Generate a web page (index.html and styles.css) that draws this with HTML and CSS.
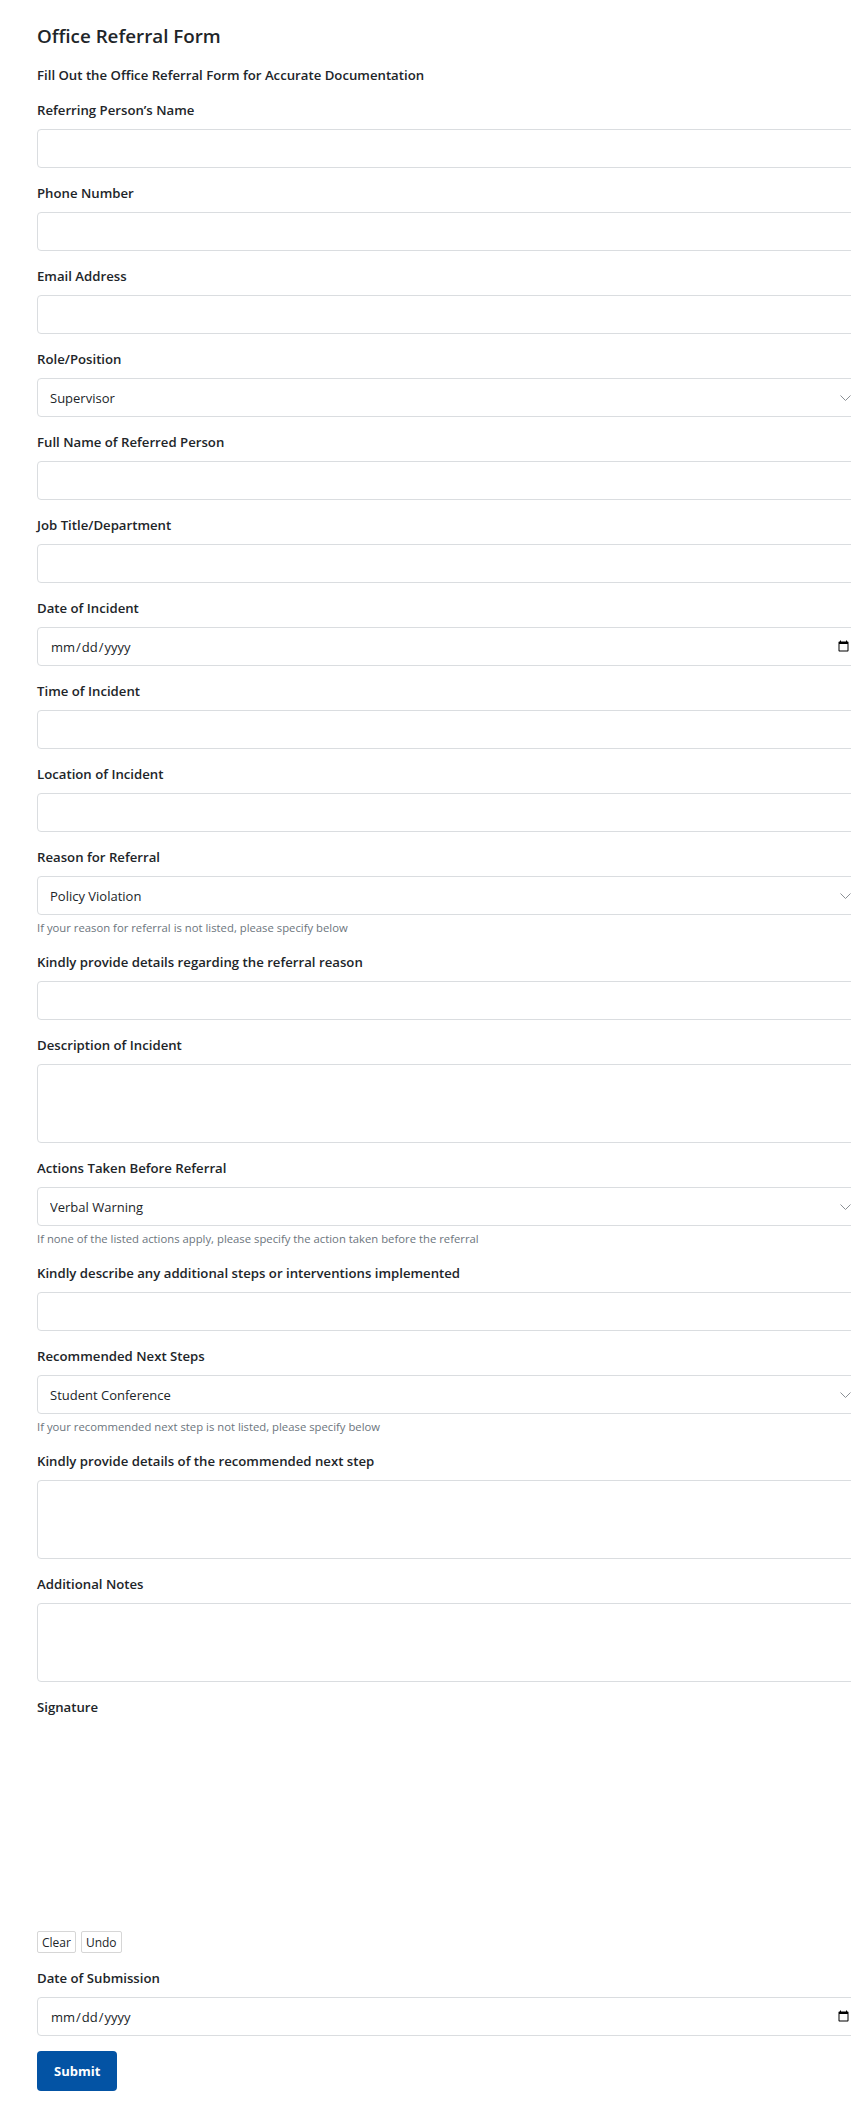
FILE: index.html
```html
<!DOCTYPE html>
<html lang="en">
<head>
<meta charset="utf-8">
<title>Office Referral Form</title>
<link rel="stylesheet" href="styles.css">
</head>
<body>
<div class="page">
<form class="form">
  <h1 class="title">Office Referral Form</h1>
  <p class="subtitle">Fill Out the Office Referral Form for Accurate Documentation</p>

  <div class="group">
    <label class="label">Referring Person’s Name</label>
    <input class="control" type="text">
  </div>
  <div class="group">
    <label class="label">Phone Number</label>
    <input class="control" type="text">
  </div>
  <div class="group">
    <label class="label">Email Address</label>
    <input class="control" type="text">
  </div>
  <div class="group">
    <label class="label">Role/Position</label>
    <div class="select-wrap">
      <select class="control select"><option>Supervisor</option></select>
      <svg class="chevron" width="11" height="6" viewBox="0 0 11 6"><path d="M0.5 0.5 L5.5 5.5 L10.5 0.5" fill="none" stroke="#8a8f94" stroke-width="1"/></svg>
    </div>
  </div>
  <div class="group">
    <label class="label">Full Name of Referred Person</label>
    <input class="control" type="text">
  </div>
  <div class="group">
    <label class="label">Job Title/Department</label>
    <input class="control" type="text">
  </div>
  <div class="group">
    <label class="label">Date of Incident</label>
    <input class="control" type="date">
  </div>
  <div class="group">
    <label class="label">Time of Incident</label>
    <input class="control" type="text">
  </div>
  <div class="group">
    <label class="label">Location of Incident</label>
    <input class="control" type="text">
  </div>
  <div class="group">
    <label class="label">Reason for Referral</label>
    <div class="select-wrap">
      <select class="control select"><option>Policy Violation</option></select>
      <svg class="chevron" width="11" height="6" viewBox="0 0 11 6"><path d="M0.5 0.5 L5.5 5.5 L10.5 0.5" fill="none" stroke="#8a8f94" stroke-width="1"/></svg>
    </div>
    <small class="help">If your reason for referral is not listed, please specify below</small>
  </div>
  <div class="group">
    <label class="label">Kindly provide details regarding the referral reason</label>
    <input class="control" type="text">
  </div>
  <div class="group">
    <label class="label">Description of Incident</label>
    <textarea class="control area"></textarea>
  </div>
  <div class="group">
    <label class="label">Actions Taken Before Referral</label>
    <div class="select-wrap">
      <select class="control select"><option>Verbal Warning</option></select>
      <svg class="chevron" width="11" height="6" viewBox="0 0 11 6"><path d="M0.5 0.5 L5.5 5.5 L10.5 0.5" fill="none" stroke="#8a8f94" stroke-width="1"/></svg>
    </div>
    <small class="help">If none of the listed actions apply, please specify the action taken before the referral</small>
  </div>
  <div class="group">
    <label class="label">Kindly describe any additional steps or interventions implemented</label>
    <input class="control" type="text">
  </div>
  <div class="group">
    <label class="label">Recommended Next Steps</label>
    <div class="select-wrap">
      <select class="control select"><option>Student Conference</option></select>
      <svg class="chevron" width="11" height="6" viewBox="0 0 11 6"><path d="M0.5 0.5 L5.5 5.5 L10.5 0.5" fill="none" stroke="#8a8f94" stroke-width="1"/></svg>
    </div>
    <small class="help">If your recommended next step is not listed, please specify below</small>
  </div>
  <div class="group">
    <label class="label">Kindly provide details of the recommended next step</label>
    <textarea class="control area"></textarea>
  </div>
  <div class="group">
    <label class="label">Additional Notes</label>
    <textarea class="control area"></textarea>
  </div>
  <div class="group">
    <label class="label">Signature</label>
    <div class="signature"></div>
    <div class="sig-actions">
      <button type="button" class="small-btn">Clear</button>
      <button type="button" class="small-btn">Undo</button>
    </div>
  </div>
  <div class="group">
    <label class="label">Date of Submission</label>
    <input class="control" type="date">
  </div>
  <button type="submit" class="submit">Submit</button>
</form>
</div>
</body>
</html>
```

FILE: styles.css
```css
html, body {
  margin: 0;
  padding: 0;
  background: #ffffff;
}

body {
  font-family: "Open Sans", "Noto Sans", sans-serif;
  color: #212529;
}

.page {
  width: 100%;
  overflow: hidden;
}

.form {
  padding: 24px 0 18px 37px;
}

.title {
  margin: 0 0 17px;
  font-size: 18.8px;
  line-height: 24px;
  font-weight: 600;
}

.subtitle {
  margin: 0 0 14px;
  font-size: 13.2px;
  line-height: 21px;
  font-weight: 600;
}

.group {
  display: flex;
  flex-direction: column;
  align-items: flex-start;
  margin-bottom: 15px;
}

.label {
  display: block;
  margin-bottom: 8px;
  font-size: 13.2px;
  line-height: 21px;
  font-weight: 600;
}

.control {
  box-sizing: border-box;
  width: 828px;
  height: 39px;
  margin: 0;
  padding: 0 12px;
  border: 1px solid #dadde0;
  border-radius: 4px;
  background: #ffffff;
  font-family: "Open Sans", "Noto Sans", sans-serif;
  font-size: 13px;
  color: #212529;
  outline: none;
}

.area {
  height: 79px;
  padding: 6px 12px;
  resize: none;
}

.select-wrap {
  position: relative;
}

.select {
  appearance: none;
  -webkit-appearance: none;
}

.chevron {
  position: absolute;
  left: 803px;
  top: 17px;
}

.help {
  display: block;
  margin-top: 4px;
  font-size: 11.3px;
  line-height: 18px;
  color: #6c757d;
}

.signature {
  height: 200px;
}

.sig-actions {
  display: flex;
  gap: 5px;
  margin-top: 5px;
}

.small-btn {
  height: 22px;
  padding: 0 4px;
  border: 1px solid #d6d6d6;
  border-radius: 2px;
  background: #ffffff;
  font-family: "Open Sans", "Noto Sans", sans-serif;
  font-size: 12px;
  color: #212529;
}

.submit {
  height: 40px;
  padding: 0 17px;
  border: none;
  border-radius: 4px;
  background: #0353a4;
  color: #ffffff;
  font-family: "Open Sans", "Noto Sans", sans-serif;
  font-size: 13px;
  font-weight: 700;
}
```
